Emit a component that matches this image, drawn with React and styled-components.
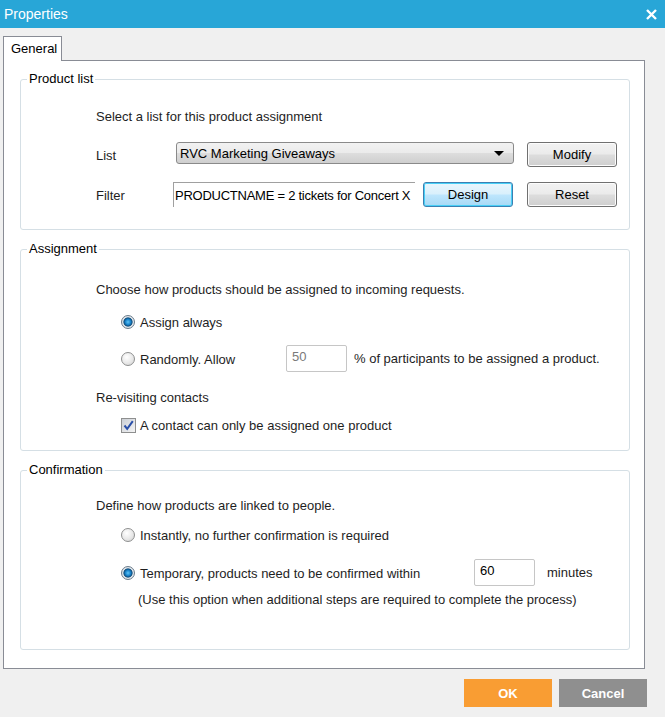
import React from 'react';
import styled, { createGlobalStyle } from 'styled-components';

const GlobalStyle = createGlobalStyle`
  html, body {
    margin: 0;
    padding: 0;
    background: #f0f0f0;
  }
  body {
    font-family: Tahoma, "Liberation Sans", Arial, sans-serif;
    font-size: 13px;
    color: #1e1e1e;
  }
`;

const Window = styled.div`
  width: 665px;
  height: 717px;
  display: flex;
  flex-direction: column;
  background: #f0f0f0;
  overflow: hidden;
`;

const TitleBar = styled.div`
  height: 28px;
  flex: none;
  display: flex;
  align-items: center;
  justify-content: space-between;
  padding: 0 8px 0 4px;
  background: #28a6d7;
  color: #fff;
  font-size: 14px;
`;

const CloseIcon = styled.svg`
  width: 11px;
  height: 11px;
  display: block;
`;

const Body = styled.div`
  flex: 1;
  display: flex;
  flex-direction: column;
  padding: 8px 20px 0 3px;
`;

const TabStrip = styled.div`
  display: flex;
  height: 24px;
`;

const Tab = styled.div`
  width: 59px;
  box-sizing: border-box;
  border: 1px solid #898c95;
  border-bottom: none;
  background: #fff;
  padding: 4px 0 0 7px;
  margin-bottom: -1px;
  position: relative;
  z-index: 1;
  color: #000;
`;

const Panel = styled.div`
  height: 609px;
  box-sizing: border-box;
  border: 1px solid #898c95;
  background: #fff;
  display: flex;
  flex-direction: column;
  gap: 11px;
  padding: 10px 14px 0 16px;
`;

const Group = styled.fieldset`
  margin: 0;
  padding: 0;
  border: 1px solid #d5dfe5;
  border-radius: 3px;
  min-width: 0;
`;

const Legend = styled.legend`
  margin-left: 6px;
  padding: 0 2px;
  line-height: 16px;
  color: #000;
`;

const GroupContent = styled.div`
  display: flex;
  flex-direction: column;
  padding: 0 0 ${p => p.$bottom}px 75px;
`;

const Text = styled.div`
  line-height: 16px;
  margin-top: ${p => p.$top || 0}px;
  padding-left: ${p => p.$indent || 0}px;
`;

const Row = styled.div`
  display: flex;
  align-items: center;
  height: ${p => p.$height || 16}px;
  margin-top: ${p => p.$top || 0}px;
  padding-left: ${p => p.$indent || 0}px;
`;

const Label = styled.div`
  width: ${p => p.$width}px;
  flex: none;
  line-height: 16px;
  padding-top: 3px;
`;

const Select = styled.div`
  width: 338px;
  height: 22px;
  box-sizing: border-box;
  border: 1px solid #8a8a8a;
  border-radius: 3px;
  background: linear-gradient(#f2f2f2 0%, #ebebeb 48%, #dddddd 52%, #cfcfcf 100%);
  display: flex;
  align-items: center;
  justify-content: space-between;
  padding: 0 9px 0 3px;
  align-self: flex-start;
  color: #000;
`;

const Arrow = styled.span`
  width: 0;
  height: 0;
  border-left: 5px solid transparent;
  border-right: 5px solid transparent;
  border-top: 5px solid #000;
`;

const Button = styled.button`
  width: 90px;
  height: 25px;
  flex: none;
  margin-left: ${p => p.$left || 0}px;
  box-sizing: border-box;
  border: 1px solid ${p => (p.$focus ? '#3c7fb1' : '#707070')};
  border-radius: 3px;
  background: ${p =>
    p.$focus
      ? 'linear-gradient(#eaf6fd 0%, #d9f0fc 48%, #bee6fd 52%, #a7d9f5 100%)'
      : 'linear-gradient(#f2f2f2 0%, #ebebeb 48%, #dddddd 52%, #cfcfcf 100%)'};
  box-shadow: inset 0 0 0 1px ${p => (p.$focus ? '#48d0f7' : '#fcfcfc')};
  font-family: inherit;
  font-size: 13px;
  color: #000;
  padding: 0;
`;

const FilterBox = styled.div`
  width: 242px;
  height: 25px;
  box-sizing: border-box;
  border-top: 1px solid #a0a0a0;
  border-left: 1px solid #a0a0a0;
  padding: 5px 0 0 1px;
  white-space: nowrap;
  letter-spacing: -0.25px;
  color: #000;
`;

const Radio = styled.span`
  width: 14px;
  height: 14px;
  flex: none;
  border-radius: 50%;
  box-sizing: border-box;
  border: 1px solid ${p => (p.$checked ? '#6b7c8b' : '#8e8f8f')};
  background: ${p =>
    p.$checked
      ? 'radial-gradient(circle at 50% 50%, #5ec4f5 0px, #1b87cf 2.5px, #0d4c7c 4.2px, #e4e8ec 5px, #c7ced6 100%)'
      : 'radial-gradient(circle at 40% 35%, #ffffff 0%, #e8e8e8 55%, #cfcfcf 100%)'};
  margin-right: 5px;
`;

const Checkbox = styled.span`
  width: 15px;
  height: 15px;
  flex: none;
  box-sizing: border-box;
  border: 1px solid #8e8f8f;
  background: linear-gradient(135deg, #cbcfd5 0%, #f4f4f4 100%);
  display: flex;
  align-items: center;
  justify-content: center;
  margin-right: 4px;
`;

const NumberBox = styled.div`
  width: ${p => p.$width}px;
  height: 27px;
  flex: none;
  box-sizing: border-box;
  border: 1px solid #c6c6c6;
  border-radius: 2px;
  padding: 3px 0 0 5px;
  color: ${p => (p.$muted ? '#7a7a7a' : '#000')};
  background: #fff;
`;

const Footer = styled.div`
  display: flex;
  justify-content: flex-end;
  gap: 7px;
  margin-top: 10px;
  margin-right: -2px;
`;

const ActionButton = styled.button`
  width: 88px;
  height: 28px;
  border: none;
  background: ${p => p.$bg};
  color: #fff;
  font-family: inherit;
  font-size: 13px;
  font-weight: bold;
  padding: 0;
`;

function CheckMark () {
  return (
    <svg width="11" height="11" viewBox="0 0 11 11">
      <path d="M1.5 5.5 L4.2 8.8 L9.8 1.2" fill="none" stroke="#2a4fa8" strokeWidth="2" />
    </svg>
  );
}

export default function App () {
  return (
    <Window>
      <GlobalStyle />
      <TitleBar>
        <span>Properties</span>
        <CloseIcon viewBox="0 0 11 11">
          <path d="M1 1 L10 10 M10 1 L1 10" stroke="#fff" strokeWidth="2.4" />
        </CloseIcon>
      </TitleBar>
      <Body>
        <TabStrip>
          <Tab>General</Tab>
        </TabStrip>
        <Panel>
          <Group>
            <Legend>Product list</Legend>
            <GroupContent $bottom={22}>
              <Text $top={22}>Select a list for this product assignment</Text>
              <Row $height={25} $top={17}>
                <Label $width={80}>List</Label>
                <Select>
                  <span>RVC Marketing Giveaways</span>
                  <Arrow />
                </Select>
                <Button $left={13}>Modify</Button>
              </Row>
              <Row $height={25} $top={15}>
                <Label $width={77}>Filter</Label>
                <FilterBox>PRODUCTNAME = 2 tickets for Concert X</FilterBox>
                <Button $left={8} $focus>Design</Button>
                <Button $left={14}>Reset</Button>
              </Row>
            </GroupContent>
          </Group>

          <Group>
            <Legend>Assignment</Legend>
            <GroupContent $bottom={17}>
              <Text $top={25}>Choose how products should be assigned to incoming requests.</Text>
              <Row $top={16} $indent={25}>
                <Radio $checked />
                <span>Assign always</span>
              </Row>
              <Row $height={27} $top={15} $indent={25}>
                <Radio />
                <Label $width={146}>Randomly. Allow</Label>
                <NumberBox $width={61} $muted>50</NumberBox>
                <Text $indent={7}>% of participants to be assigned a product.</Text>
              </Row>
              <Text $top={18}>Re-visiting contacts</Text>
              <Row $top={11} $indent={25}>
                <Checkbox><CheckMark /></Checkbox>
                <span>A contact can only be assigned one product</span>
              </Row>
            </GroupContent>
          </Group>

          <Group>
            <Legend>Confirmation</Legend>
            <GroupContent $bottom={41}>
              <Text $top={20}>Define how products are linked to people.</Text>
              <Row $top={13} $indent={25}>
                <Radio />
                <span>Instantly, no further confirmation is required</span>
              </Row>
              <Row $height={27} $top={16} $indent={25}>
                <Radio $checked />
                <Label $width={334}>Temporary, products need to be confirmed within</Label>
                <NumberBox $width={61}>60</NumberBox>
                <Text $indent={12}>minutes</Text>
              </Row>
              <Text $top={6} $indent={42}>(Use this option when additional steps are required to complete the process)</Text>
            </GroupContent>
          </Group>
        </Panel>
        <Footer>
          <ActionButton $bg="#f99d33">OK</ActionButton>
          <ActionButton $bg="#8f8f8f">Cancel</ActionButton>
        </Footer>
      </Body>
    </Window>
  );
}
